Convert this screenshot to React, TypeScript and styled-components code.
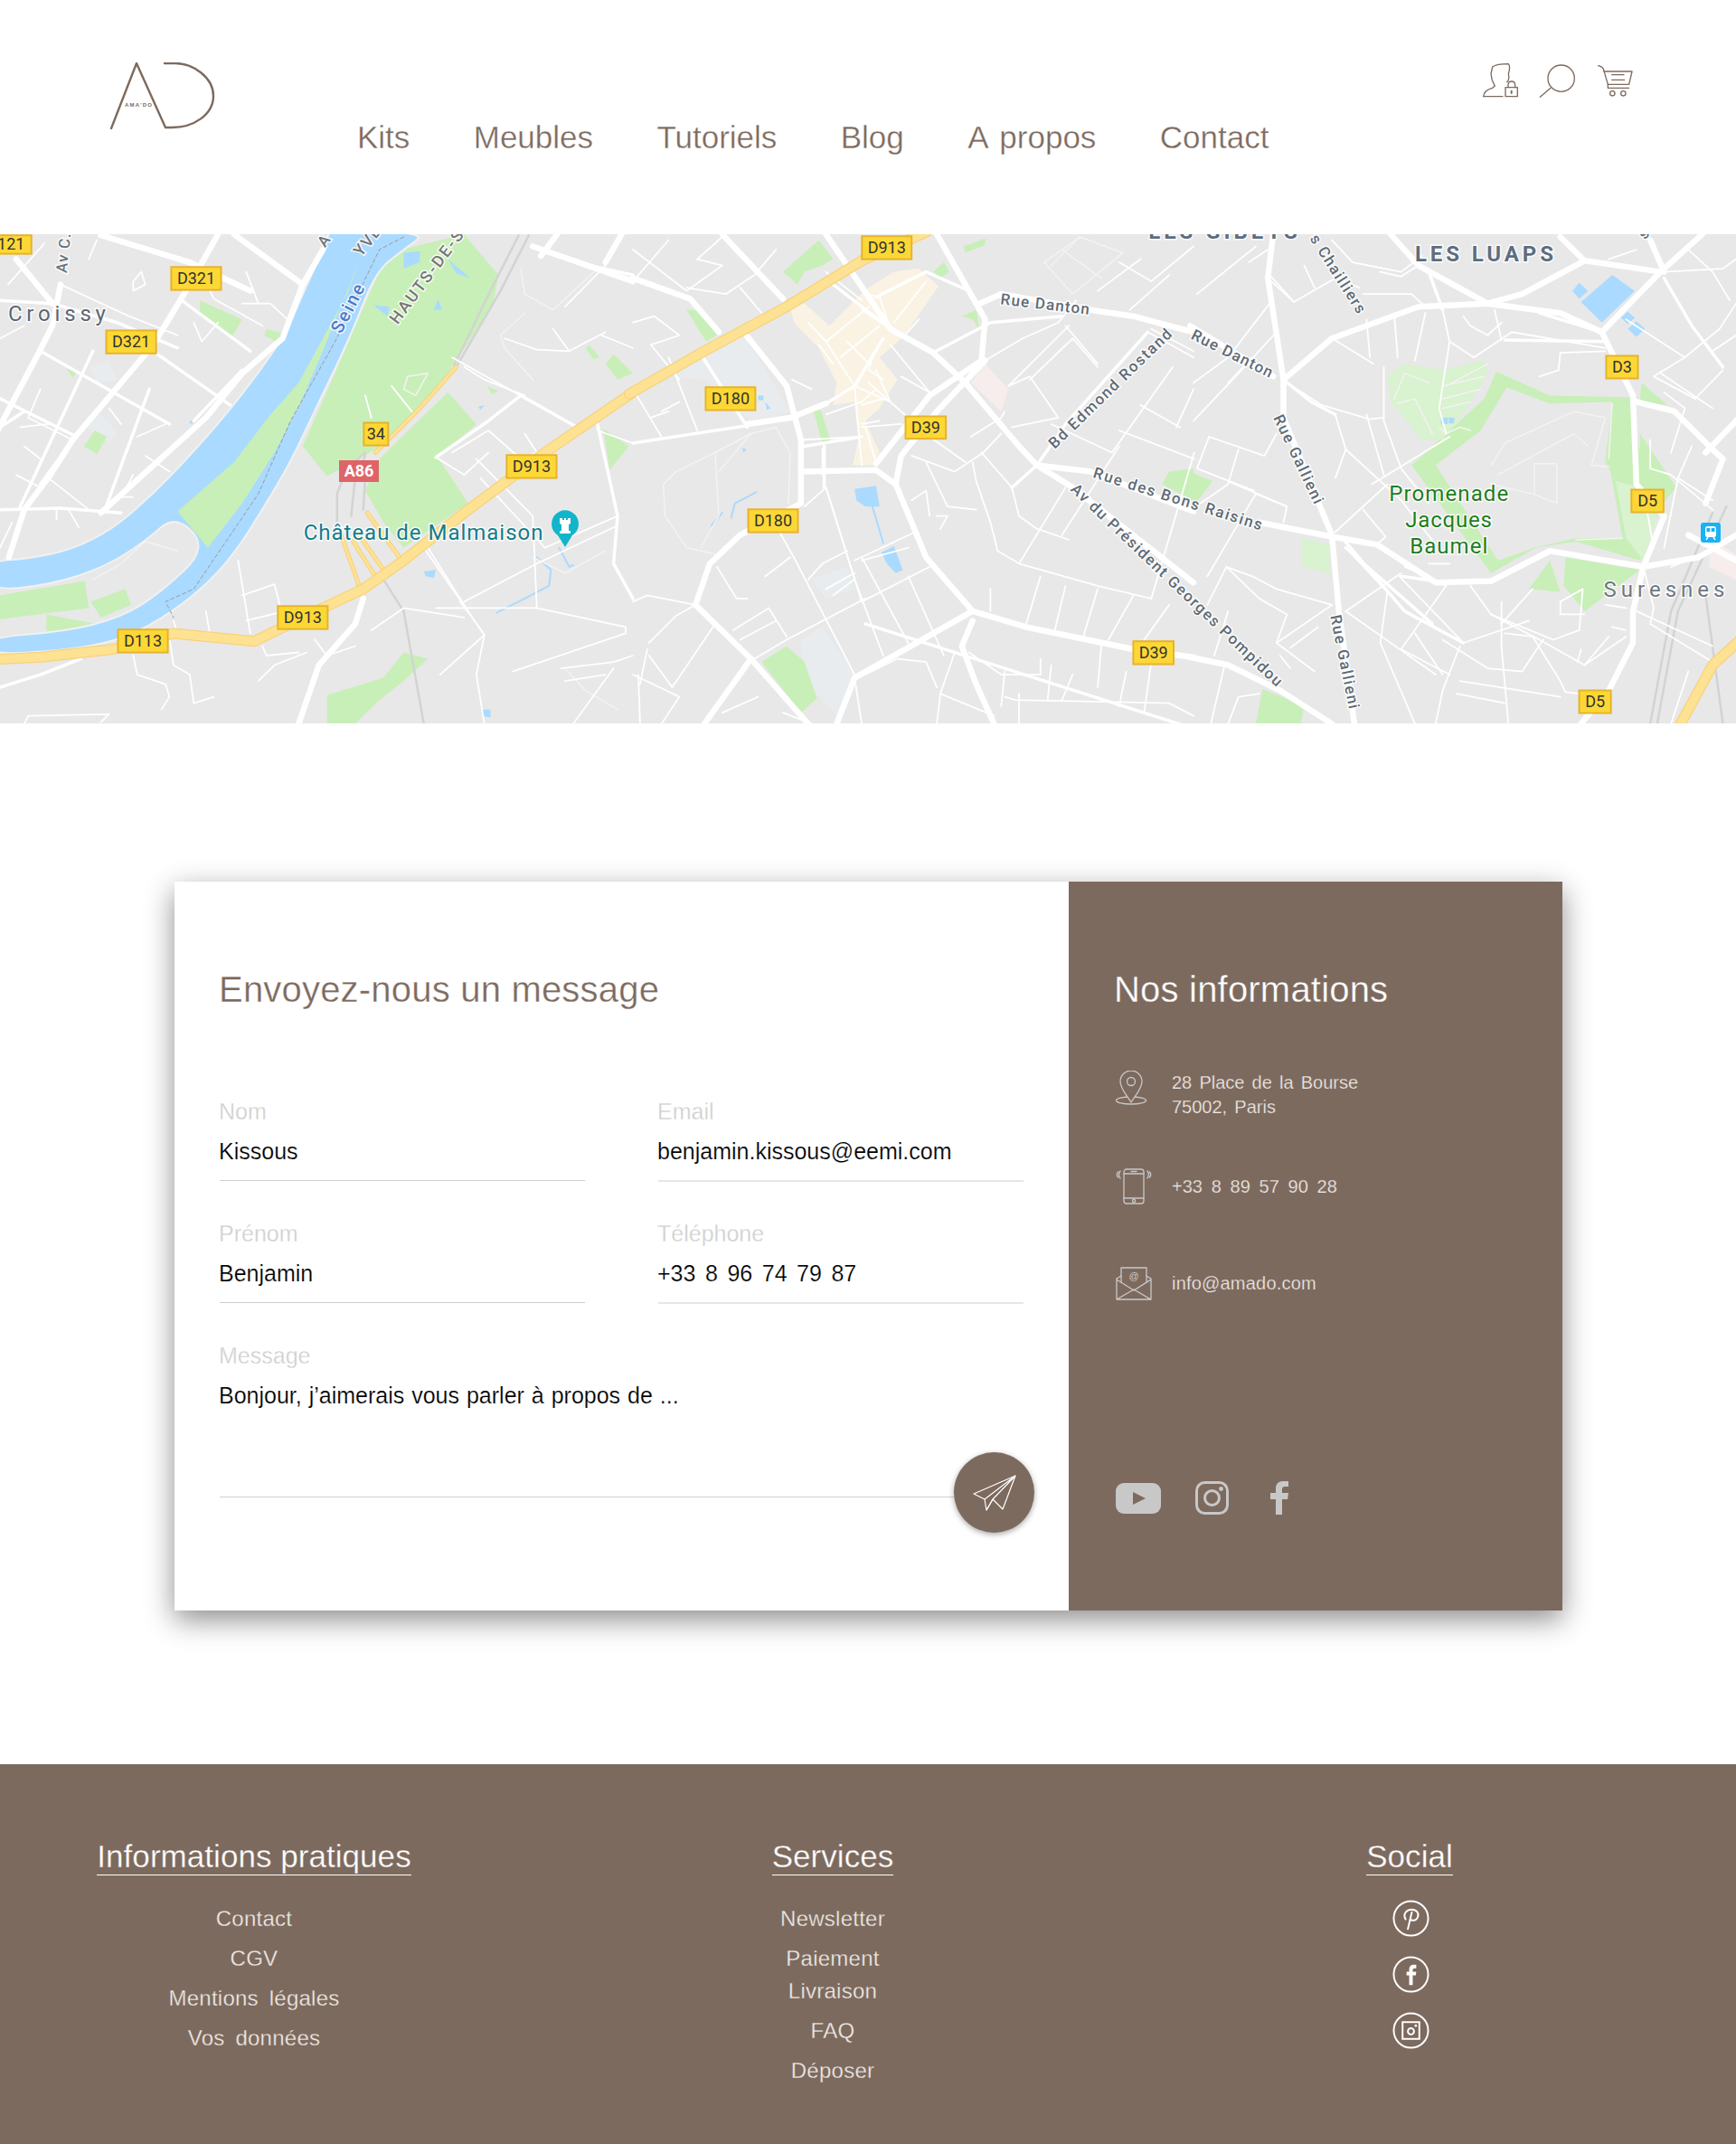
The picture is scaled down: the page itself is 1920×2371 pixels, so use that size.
import styled, { createGlobalStyle } from "styled-components";

const BROWN = "#7d6a5e";
const PALE = "#c8c8c8";

const GlobalStyle = createGlobalStyle`
  html, body { margin: 0; padding: 0; background: #fff; }
  body { font-family: "Liberation Sans", Arial, sans-serif; }
  * { box-sizing: border-box; }
`;

/* ---------- header ---------- */
const Header = styled.header`
  display: flex;
  align-items: flex-start;
  height: 259px;
  padding: 0 114px 0 122px;
`;
const Logo = styled.svg`
  width: 116px;
  height: 74px;
  margin-top: 69px;
  flex: none;
`;
const Nav = styled.nav`
  display: flex;
  gap: 70.4px;
  margin: 132px 0 0 157px;
`;
const NavLink = styled.a`
  font-size: 35px;
  line-height: 40px;
  word-spacing: 4px;
  color: ${BROWN};
  -webkit-text-stroke: 0.35px #fff;
  paint-order: fill stroke;
`;
const HeaderIcons = styled.div`
  display: flex;
  gap: 24px;
  margin: 69px 0 0 auto;
`;
const HeadIcon = styled.svg`
  width: 40px;
  height: 40px;
  overflow: visible;
  fill: none;
  stroke: ${BROWN};
  stroke-width: 4;
  stroke-linecap: round;
  stroke-linejoin: round;
`;

/* ---------- map ---------- */
const MapSvg = styled.svg`
  display: block;
  width: 1920px;
  height: 541px;
  background: #e8e8e8;
`;
const Road = styled.polyline<{ $w: number; $c?: string }>`
  fill: none;
  stroke: ${(p) => p.$c ?? "#fff"};
  stroke-width: ${(p) => p.$w}px;
  stroke-linecap: round;
  stroke-linejoin: round;
  vector-effect: non-scaling-stroke;
`;
const Area = styled.polygon<{ $c: string }>`
  fill: ${(p) => p.$c};
`;
const MapLabel = styled.text<{ $size: number; $c: string; $w?: number }>`
  font-family: Roboto, "Liberation Sans", sans-serif;
  font-size: ${(p) => p.$size}px;
  font-weight: ${(p) => p.$w ?? 500};
  fill: ${(p) => p.$c};
  stroke: rgba(255, 255, 255, 0.85);
  stroke-width: 3px;
  paint-order: stroke;
`;
const ShieldText = styled.text<{ $c: string; $w: number }>`
  font-family: Roboto, "Liberation Sans", sans-serif;
  font-size: 18px;
  font-weight: ${(p) => p.$w};
  fill: ${(p) => p.$c};
  text-anchor: middle;
`;

type Region = {
  ox: number;
  sx: number;
  pale: string[];
  parks: string[];
  water: string[];
  stream: string[];
  lanes: string[];
  small: string[];
  mid: string[];
  big: string[];
  rail: string[];
  ramp: string[];
  highway: string[];
};

const SY = 2.851;

const seine = [
  [815, 12], [790, 90], [750, 200], [710, 320], [640, 450], [560, 580], [470, 710], [380, 830], [280, 940],
  [180, 1005], [70, 1035], [-30, 1042], [-30, 1137], [130, 1115], [260, 1060], [360, 980], [435, 895], [515, 1000],
  [400, 1140], [300, 1220], [160, 1265], [-30, 1282], [-30, 1337], [150, 1325], [290, 1295], [400, 1225], [500, 1130],
  [580, 1020], [650, 880], [720, 730], [790, 540], [870, 330], [930, 130], [1000, 60], [1060, 5], [815, 5],
];

const smoothPath = (pts: number[][]) => {
  const mid = (a: number[], b: number[]) => `${(a[0] + b[0]) / 2},${(a[1] + b[1]) / 2}`;
  let d = `M${mid(pts[pts.length - 1], pts[0])}`;
  pts.forEach((p, i) => {
    d += ` Q${p[0]},${p[1]} ${mid(p, pts[(i + 1) % pts.length])}`;
  });
  return d + "Z";
};

const regions: Region[] = [
  {
    ox: 0,
    sx: 2.24,
    pale: ["220,430 270,410 290,470 240,480", "240,560 290,640 270,670 215,620"],
    parks: [
      "950,100 1010,55 1150,12 1235,140 1220,240 1130,410 1060,540 930,690 810,775 750,680 830,450 880,300",
      "1110,510 1180,610 1085,715 1160,860 1000,1000 950,920 905,820 940,720 1060,570",
      "495,220 600,280 575,335 495,270",
      "660,310 705,325 690,355 655,330",
      "165,435 190,445 180,465",
      "235,630 265,650 240,705 208,680",
      "0,1150 210,1105 220,1190 0,1225",
      "225,1170 310,1130 325,1180 250,1220",
      "115,1210 240,1240 240,1265 115,1270",
      "810,1465 950,1410 1000,1330 1060,1350 1000,1420 940,1480 880,1555 810,1555",
      "1495,625 1558,680 1510,755",
      "1460,360 1485,400 1470,405 1450,370",
      "1520,390 1568,450 1530,470 1500,420",
      "1205,490 1235,505 1220,515",
    ],
    water: [
      "1000,70 1040,65 1040,100 1000,120",
      "1110,90 1165,150 1130,135",
      "925,235 965,240 960,270",
      "1085,215 1095,250 1075,250",
      "1050,1075 1080,1070 1075,1095 1055,1090",
      "1195,1510 1215,1510 1215,1535 1195,1530",
      "1185,555 1200,550 1190,565",
      "470,600 478,600 478,608 470,608",
    ],
    stream: ["1330,1030 1365,1070 1360,1120 1300,1160 1230,1205", "1385,1000 1410,1060 1420,1055"],
    lanes: [
      "1290,120 1300,200 1370,250 1480,120",
      "1300,260 1240,330 1250,370 1320,470",
      "1010,460 1060,450 1030,520 1000,500 1010,460",
      "230,1100 300,1050 360,980 440,1010",
      "1320,1030 1400,1080 1500,1010",
      "1400,1380 1450,1450 1530,1510",
    ],
    small: [
      "260,15 470,105", "60,300 0,340", "330,160 350,130 360,170 330,190 330,160", "150,170 320,270 440,330",
      "600,230 670,230 720,290", "520,190 530,215 650,300", "480,290 500,350 540,290", "100,500 70,590 180,660",
      "50,620 120,610", "60,680 100,720", "40,770 100,810", "120,780 220,880", "270,560 300,610", "340,650 410,610",
      "360,710 420,760", "330,770 300,840 330,840", "170,880 195,935", "140,880 140,910", "30,920 0,1000",
      "590,1040 620,1270", "600,1150 680,1115 695,1190", "610,1230 690,1205", "780,1290 810,1340 880,1310",
      "420,1290 430,1370 470,1400 480,1490 530,1470", "330,1340 340,1400 410,1430 420,1470 400,1510",
      "640,1420 680,1370 760,1330", "650,1310 660,1340 740,1330", "1200,1275 1170,1220 1140,1170",
      "1150,1170 1330,1050 1530,930", "1330,1190 1550,1250 1550,1270 1270,1390", "1050,1000 1200,1275 1090,1400",
      "1080,1190 1330,1190", "1200,1275 1180,1400 1200,1555", "1390,1380 1520,1360 1568,1340", "1400,1420 1500,1400",
      "1520,1380 1420,1555", "920,1260 1000,1190 1150,1220", "60,1555 70,1530 270,1525 250,1550",
      "1120,400 1430,620", "1150,430 1200,470 1300,520", "1400,240 1500,110", "1370,310 1410,380 1500,320",
      "1490,330 1568,370", "1250,340 1330,375 1410,380", "1480,630 1568,670", "1060,1000 1160,1200",
      "1190,780 1350,1000", "1080,715 1150,770 1210,700", "1120,700 1210,630 1290,720 1330,700 1300,640",
      "905,520 920,590", "970,490 1020,570", "520,1270 510,1200", "440,1270 430,1230", "1180,720 1320,900 1330,1190",
      "1350,1000 1530,900", "20,170 110,40", "220,90 240,30", "610,130 640,230",
    ],
    mid: [
      "0,220 130,230 290,290 440,370", "100,380 420,610", "390,390 570,550", "0,530 190,650", "450,220 620,380",
      "0,880 150,875 300,890", "0,1440 100,1400 200,1350", "1480,610 1530,900 1520,1050 1568,1160",
      "1430,620 1290,520 1210,600 1080,715", "1568,140 1460,110", "180,660 100,800", "0,620 60,570",
      "370,500 260,880", "480,600 600,440", "230,380 50,870",
    ],
    big: [
      "540,12 470,170 380,360 260,540 180,660 125,770 60,880 22,1030",
      "150,170 130,300 90,400 -10,640", "40,90 130,230", "250,15 470,100 620,190", "580,12 750,170",
      "800,60 750,170 700,340 600,450 510,590 380,740 250,890", "900,1160 880,1240 790,1370 740,1555",
      "1320,50 1568,160", "1380,12 1340,80", "1540,12 1500,100",
    ],
    rail: [
      "1310,15 1240,190 1130,430", "1285,15 1215,190 1125,425", "905,700 860,750 835,830 835,960",
      "905,710 880,780 870,900", "905,770 900,880", "940,1080 1000,1200 1050,1555",
    ],
    ramp: [
      "1130,430 1040,560 930,700", "845,960 890,1120", "875,980 930,1090", "890,960 950,1070", "910,890 995,1040",
    ],
    highway: ["1568,510 1350,700 1150,890 1000,1040 900,1130 800,1190 630,1295 430,1270 280,1320 100,1345 -10,1352"],
  },
  {
    ox: 700,
    sx: 2.529,
    pale: [
      "110,460 190,395 230,350 310,330 440,570 330,600 200,470",
      "470,1290 530,1250 620,1400 570,1530 480,1420",
      "500,1100 600,1060 620,1130 540,1160",
    ],
    parks: [
      "150,250 185,250 235,330 205,350",
      "420,130 520,30 560,90 530,110 480,130 460,170",
      "920,270 960,250 970,315 950,280",
      "840,130 870,100 885,130 860,150",
      "925,50 985,25 985,45 930,70",
      "505,570 525,565 555,670 530,670",
      "360,1360 430,1310 480,1360 515,1475 470,1520",
      "1480,800 1500,760 1568,750 1568,850",
    ],
    water: [
      "620,815 680,805 690,870 650,870 625,850",
      "695,1015 730,995 755,1070 735,1080 710,1050",
      "225,925 250,890 225,930",
      "350,520 365,520 365,535 350,535",
      "370,540 385,560 375,565",
      "305,685 318,690 310,700",
    ],
    stream: ["670,870 700,985", "345,825 285,860 275,905", "250,890 220,930"],
    lanes: [
      "85,800 120,760 230,700 330,640 400,620 440,700 435,860",
      "230,700 240,900 190,1000",
      "85,800 90,900 150,1000 230,1020",
      "240,760 330,640",
      "1150,100 1250,20 1370,70 1230,200 1150,100",
      "1200,60 1310,150",
      "1250,20 1170,110",
    ],
    small: [
      "0,60 150,190 250,110 180,90", "0,290 60,270 130,330 50,360 130,470", "100,400 180,630", "0,500 80,650",
      "80,570 130,540", "50,590 100,570", "150,180 260,200 340,140 400,60", "300,180 360,260", "540,130 640,220",
      "445,470 500,500", "470,660 640,650", "530,690 530,770", "640,620 750,610", "540,580 640,540 680,500",
      "620,490 720,540", "660,480 830,650 930,730", "750,460 830,510", "720,360 830,510",
      "780,710 900,760 980,700 1030,640", "820,730 880,870 960,880",
      "950,730 960,790 1000,920 1020,1010 1080,1050 1300,1120 1450,1160", "1060,810 1080,900 1130,940 1220,975",
      "1060,810 1130,740", "1080,1050 1210,810", "1200,960 1360,680", "945,650 1030,590 1040,570",
      "1220,300 1050,490 1110,460 1190,590 1060,620", "975,700 1060,810", "985,410 1090,340 1190,290 1240,220",
      "1110,470 1230,340 1300,430", "1300,420 1210,300", "1510,430 1340,700 1170,610", "1420,550 1530,620",
      "1450,310 1568,380", "1520,620 1568,500", "1570,700 1450,1160", "1360,630 1570,720",
      "480,870 540,810 620,1100 700,1340", "540,810 640,1170", "410,950 450,1030 620,1400", "640,1040 770,1000",
      "620,1040 790,950", "640,1170 830,1060", "650,1160 430,1290 340,1350", "640,1030 770,1300", "770,1090 870,1340",
      "280,1260 380,1190 430,1280", "300,1290 400,1230", "235,1060 290,1160 320,1160", "45,1300 120,1215 175,1180",
      "230,1240 110,1440 45,1340", "0,1400 130,1470 80,1555", "20,1555 15,1400", "40,1320 20,1430",
      "0,1170 40,1150 175,1180", "370,1090 440,1030", "530,1050 600,1010", "540,1130 620,1080", "560,1150 620,1100",
      "1100,1240 1140,1090", "1180,1260 1210,1120", "1260,1280 1300,1130", "1330,1290 1400,1150", "1000,1200 1000,1130",
      "1430,1290 1500,1180", "1040,1470 1070,1480 1500,1490", "940,1330 1030,1400 1140,1400 1140,1350",
      "860,1460 1010,1530", "1040,1390 1030,1500", "1080,1460 1080,1555", "1170,1370 1160,1480", "1230,1400 1200,1480",
      "1310,1310 1300,1440", "1380,1390 1360,1500", "1450,1360 1430,1520", "1500,1490 1568,1530", "860,1460 900,1330",
      "860,1460 850,1555", "620,1410 640,1555", "650,1400 740,1350 820,1360 850,1440", "500,1555 420,1520",
      "350,1470 250,1520", "530,1050 490,1100", "780,850 820,820 830,900", "850,900 880,900 860,940",
      "1360,100 1450,160 1568,50", "1390,250 1500,140", "1440,320 1568,400", "1300,190 1420,90",
      "0,160 100,30", "180,90 250,20",
      // old town lanes
      "490,290 540,350 620,490", "540,350 660,240", "580,400 690,300", "600,350 660,420", "640,250 720,310",
      "680,440 720,540", "640,610 690,600", "640,550 700,530", "620,490 640,740", "730,290 820,160", "760,330 800,280",
      "520,360 560,420", "670,400 660,440 700,470", "650,620 680,730", "720,310 690,210 650,200",
    ],
    mid: [
      "0,670 320,615", "540,545 620,490 700,340", "560,170 720,310", "680,210 820,130 940,190",
      "1130,740 1210,610 1440,320", "1130,740 1060,810", "480,680 640,650", "535,680 535,810",
      "650,1240 1568,1570", "190,390 320,620", "840,385 1000,290 1200,270",
    ],
    big: [
      "0,150 160,215 240,320", "250,12 420,215", "310,320 430,490 470,660 470,860 300,960 215,1050 175,1180",
      "320,610 440,590 540,545", "540,12 720,310 840,385 930,480 1080,680 1130,740 1230,810 1568,1110",
      "850,12 985,280 975,410 830,520 680,735", "985,410 850,570 750,710 735,800 820,1030 950,1200",
      "470,760 680,755 735,800", "950,1200 1100,1250 1400,1320 1568,1345", "950,1200 620,1410 570,1555",
      "950,1230 920,1310 960,1430 1010,1555", "175,1180 330,1350 490,1555", "330,1350 200,1555",
      "970,230 1030,200 1280,250 1400,270 1568,320", "1130,740 1280,760 1568,885",
    ],
    rail: [],
    ramp: [],
    highway: ["-10,515 200,380 430,240 640,95 820,5"],
  },
  {
    ox: 1320,
    sx: 2.613,
    pale: [
      "1220,790 1290,810 1340,900 1300,1040 1250,970",
      "560,460 610,420 720,440 840,410 850,450 790,560 720,660 660,660 570,540",
      "310,970 395,990 395,1080 315,1060",
    ],
    parks: [
      "1075,1030 1290,1070 1130,1200 1070,1120",
      "1030,1040 1060,1140 970,1130",
      "0,765 55,790 0,870",
      "200,1445 320,1500 310,1555 180,1555",
      "1295,480 1370,550 1290,540",
      "1290,640 1395,810 1340,880 1290,800",
    ],
    water: [
      "1210,140 1275,190 1180,290 1120,225",
      "1115,165 1140,190 1115,215 1095,190",
      "1255,255 1275,275 1255,295 1235,275",
      "1280,285 1305,310 1280,335 1255,310",
      "715,590 735,590 735,610 715,610",
      "738,588 755,592 752,608 738,608",
    ],
    stream: [],
    lanes: [
      "860,740 900,670 1100,570 1190,590 1150,740 1200,745", "880,770 1100,640 1140,680",
      "985,735 1050,735 1050,860 980,830 860,800", "985,735 985,830", "730,490 850,420", "720,490 840,460",
      "720,530 830,500", "720,560 800,540", "580,530 610,450 680,480", "590,545 640,530 690,640",
      "710,620 730,640 770,620 800,630", "1105,975 1240,970", "1210,545 1200,720",
    ],
    small: [
      "215,150 290,225 410,150 480,180", "320,110 350,180", "400,30 460,100 600,130 660,80", "540,130 600,145 650,110",
      "490,200 630,200 670,240", "500,280 510,400", "580,260 590,400", "670,260 640,410", "720,250 740,350 710,560 730,640",
      "740,350 810,400 920,320 1190,370", "890,345 870,250", "780,270 800,300 850,330 890,290", "1060,385 1190,380",
      "1060,385 1055,440 1000,460", "400,340 520,420", "270,480 370,550 510,595 550,590", "410,580 440,690 600,850 700,990",
      "550,430 550,600 600,750 680,860", "500,580 550,770", "515,800 740,650", "410,950 560,800", "490,880 555,965 530,990",
      "440,690 410,780", "610,1060 730,1120", "680,1050 740,1050", "600,1080 440,1200", "595,1090 780,1300 970,1230",
      "730,1120 600,1320 740,1400", "440,1000 560,1140 540,1300 640,1555", "440,1200 700,1400", "640,1270 720,1400",
      "250,1340 280,1380", "190,1160 270,1210 240,1300 350,1390", "190,1160 95,1060 40,1180", "95,1060 170,1090 240,1130 400,1180",
      "240,1300 400,1180", "360,1250 280,1315", "60,1340 100,1200", "130,690 100,800 20,860", "45,650 205,710 240,640",
      "45,650 10,750 175,820", "100,790 270,870 260,920", "180,830 270,870", "180,830 40,1090",
      "800,1120 860,1210 1000,1290 1130,1370 1250,1280", "890,1170 890,1310 910,1555", "980,1130 890,1240",
      "860,1210 1040,1290 1115,1260 1125,1130 1060,1170 1060,1210 1130,1210", "1010,1290 950,1390 850,1380 720,1290",
      "900,1270 980,1280 1060,1420 1075,1455 1200,1470", "770,1420 1060,1470", "770,1310 720,1450 700,1555",
      "760,1460 900,1490", "1120,1320 1110,1360", "1190,1180 1250,1190", "1210,1250 1250,1260", "1280,1200 1500,1310",
      "1330,1190 1320,1240 1500,1360", "1300,1060 1330,1190", "1500,880 1380,770 1320,750 1320,660", "1380,1060 1450,1030",
      "1310,880 1330,1000", "1440,680 1400,780 1500,850", "1400,780 1360,1000", "1360,130 1530,120 1568,90",
      "1430,60 1500,130 1550,220", "1250,280 1420,400 1330,460 1450,530", "1420,400 1520,310 1568,230", "1350,450 1500,560",
      "1450,530 1530,440", "1530,640 1568,590", "1280,60 1200,90", "1500,380 1568,330", "1360,510 1420,560 1380,700",
      "0,480 100,400 220,230", "0,600 130,450 240,320", "10,200 180,50", "160,100 215,60", "100,480 170,400", "290,225 220,140",
      "100,1555 130,1470 190,1460", "50,1555 90,1370", "1130,1370 1200,1280", "1430,1390 1380,1555",
    ],
    mid: [
      "1360,150 1440,300 1530,430", "720,250 680,130", "1000,260 1180,320", "260,470 340,540 410,580", "900,345 1190,350",
      "430,970 610,1200 780,1300", "440,1000 690,1240", "600,1090 730,1110",
    ],
    big: [
      "230,12 215,150 260,470 260,590 400,960 420,1200 465,1555",
      "260,470 400,340 650,240 850,230 1060,260 1180,320 1270,520 1280,800 1360,900 1300,1060 1270,1200 1270,1300 1200,1450 1120,1555",
      "-10,1345 100,1370 250,1450 400,1555", "190,920 400,965 530,990 700,1110 860,1105 1030,1010 1300,1060 1460,1030 1568,960",
      "570,12 650,110 850,230", "850,230 950,200 1130,95 1350,130 1470,12", "1180,320 1350,130", "1320,30 1360,130",
      "1280,540 1390,570 1500,690 1530,720 1480,860", "1568,600 1480,700", "1060,20 1130,95", "-10,300 230,460",
      "1430,960 1568,1040",
    ],
    rail: ["1540,870 1400,1200 1340,1555", "1500,890 1380,1200 1320,1555", "1480,1150 1530,1555"],
    ramp: [],
    highway: ["1580,1290 1500,1370 1400,1570"],
  },
];

type ShieldData = { r: number; x: number; y: number; w: number; h: number; t: string };
const shields: ShieldData[] = [
  { r: 0, x: -25, y: 12, w: 105, h: 64, t: "121" },
  { r: 0, x: 422, y: 112, w: 128, h: 78, t: "D321" },
  { r: 0, x: 261, y: 312, w: 128, h: 78, t: "D321" },
  { r: 0, x: 899, y: 603, w: 65, h: 77, t: "34" },
  { r: 0, x: 1253, y: 705, w: 128, h: 78, t: "D913" },
  { r: 0, x: 686, y: 1181, w: 128, h: 78, t: "D913" },
  { r: 0, x: 290, y: 1255, w: 128, h: 78, t: "D113" },
  { r: 1, x: 638, y: 15, w: 144, h: 78, t: "D913" },
  { r: 1, x: 201, y: 491, w: 144, h: 78, t: "D180" },
  { r: 1, x: 760, y: 583, w: 118, h: 76, t: "D39" },
  { r: 1, x: 320, y: 876, w: 144, h: 78, t: "D180" },
  { r: 1, x: 1397, y: 1292, w: 118, h: 78, t: "D39" },
  { r: 2, x: 1190, y: 392, w: 97, h: 77, t: "D3" },
  { r: 2, x: 1263, y: 814, w: 98, h: 77, t: "D5" },
  { r: 2, x: 1112, y: 1447, w: 97, h: 77, t: "D5" },
];

type LabelData = { r: number; t: string; a: number[]; b: number[]; size: number; c: string; w?: number };
const ROAD_C = "#5f6b76";
const labels: LabelData[] = [
  { r: 0, t: "Croissy", a: [20, 285], b: [262, 285], size: 24, c: "#5b6670", w: 400 },
  { r: 0, t: "Av C.", a: [165, 135], b: [175, 10], size: 17, c: "#6b747c" },
  { r: 0, t: "A", a: [805, 55], b: [825, 20], size: 17, c: "#6b747c" },
  { r: 0, t: "YVE", a: [895, 85], b: [945, 5], size: 18, c: "#777" },
  { r: 0, t: "HAUTS-DE-S", a: [985, 298], b: [1150, 15], size: 18, c: "#777" },
  { r: 0, t: "Seine", a: [845, 328], b: [905, 180], size: 20, c: "#4a7ccc" },
  { r: 0, t: "Château de Malmaison", a: [752, 975], b: [1345, 975], size: 24, c: "#137c8b", w: 400 },
  { r: 1, t: "Rue Danton", a: [1027, 232], b: [1275, 265], size: 17, c: ROAD_C },
  { r: 1, t: "Bd Edmond Rostand", a: [1180, 690], b: [1510, 330], size: 17, c: ROAD_C },
  { r: 1, t: "Rue des Bons Raisins", a: [1285, 778], b: [1755, 945], size: 17, c: ROAD_C },
  { r: 1, t: "Av du Président Georges Pompidou", a: [1222, 818], b: [1800, 1440], size: 17, c: ROAD_C },
  { r: 2, t: "LES LUAPS", a: [640, 98], b: [1040, 98], size: 24, c: "#5d6d80", w: 700 },
  { r: 2, t: "LES GIBETS", a: [-130, 26], b: [300, 26], size: 24, c: "#5d6d80", w: 700 },
  { r: 2, t: "s Chailliers", a: [335, 25], b: [475, 265], size: 17, c: ROAD_C },
  { r: 2, t: "s", a: [1305, 30], b: [1320, 10], size: 17, c: ROAD_C },
  { r: 2, t: "Rue Danton", a: [-10, 340], b: [220, 465], size: 17, c: ROAD_C },
  { r: 2, t: "Rue Gallieni", a: [230, 590], b: [350, 865], size: 17, c: ROAD_C },
  { r: 2, t: "Rue Gallieni", a: [395, 1215], b: [450, 1510], size: 17, c: ROAD_C },
  { r: 2, t: "Promenade", a: [565, 853], b: [910, 853], size: 24, c: "#1e7e1e", w: 400 },
  { r: 2, t: "Jacques", a: [612, 935], b: [862, 935], size: 24, c: "#1e7e1e", w: 400 },
  { r: 2, t: "Baumel", a: [625, 1018], b: [850, 1018], size: 24, c: "#1e7e1e", w: 400 },
  { r: 2, t: "Suresnes", a: [1185, 1155], b: [1535, 1155], size: 24, c: "#6f7782", w: 400 },
];

const toFull = (r: number, p: number[]) => {
  const reg = regions[r];
  return [reg.ox + p[0] / reg.sx, p[1] / SY - 4];
};

const ISLAND = "895,80 860,200 800,340 740,480 670,580 580,730 440,885 515,1000 600,860 680,700 745,540 800,380";

const MapView = () => (
  <MapSvg viewBox="0 0 1920 541">
    {regions.map((reg, i) => (
      <g key={i} transform={`translate(${reg.ox} -4) scale(${1 / reg.sx} ${1 / SY})`}>
        {i === 1 && (
          <>
            <Area $c="#faf3e3" points="440,240 480,230 550,300 620,220 660,180 730,130 800,120 855,175 760,330 690,400 740,470 690,560 650,600 690,700 670,740 615,740 630,660 620,540 560,550 570,480 520,370 450,290" />
            <Area $c="#f8eded" points="985,420 1050,500 1030,570 945,480" />
          </>
        )}
        {i === 2 && (
          <>
            <Area $c="#f8eded" points="1490,970 1568,1020 1568,1100 1490,1060" />
            <path
              fill="#c8efb8"
              fillRule="evenodd"
              d="M875,445 L1030,520 L1260,525 L1290,700 L1300,800 L1340,900 L1290,1040 L1105,980 L990,1000 L860,1080 L630,740 L730,640 L840,530Z M905,495 L830,630 L700,740 L880,1040 L985,1000 L1105,970 L1240,970 L1205,760 L1190,730 L1210,540 L1030,545Z"
            />
          </>
        )}
        {reg.pale.map((p) => (
          <Area key={p} $c={i === 2 ? "#d9f2cf" : "#e9ecee"} points={p} />
        ))}
        {reg.parks.map((p) => (
          <Area key={p} $c="#c8efb8" points={p} />
        ))}
        {i === 0 && (
          <>
            <path d={smoothPath(seine)} fill="#aadaff" stroke="#f1f1f1" strokeWidth={2} vectorEffect="non-scaling-stroke" />
            <Area $c="#c8efb8" points={ISLAND} />
            <Road $w={1} $c="#9b9b9b" strokeDasharray="4 3" points="1000,20 940,60 830,350 720,600 640,830 480,1130 410,1170 430,1220" />
          </>
        )}
        {reg.water.map((p) => (
          <Area key={p} $c="#aadaff" points={p} />
        ))}
        {reg.stream.map((p) => (
          <Road key={p} $w={2} $c="#aadaff" points={p} />
        ))}
        {reg.lanes.map((p) => (
          <Road key={p} $w={1.5} $c="#f3f3f3" points={p} />
        ))}
        {reg.rail.map((p) => (
          <Road key={p} $w={2.5} $c="#d3d3d3" points={p} />
        ))}
        {reg.small.map((p) => (
          <Road key={p} $w={1.8} points={p} />
        ))}
        {reg.mid.map((p) => (
          <Road key={p} $w={3.5} points={p} />
        ))}
        {reg.big.map((p) => (
          <Road key={p} $w={6.5} points={p} />
        ))}
        {reg.ramp.map((p) => (
          <Road key={p} $w={5} $c="#f8d27c" points={p} />
        ))}
        {reg.ramp.map((p) => (
          <Road key={p} $w={3} $c="#fde293" points={p} />
        ))}
        {reg.highway.map((p) => (
          <Road key={p} $w={12} $c="#f9d27a" points={p} />
        ))}
        {reg.highway.map((p) => (
          <Road key={p} $w={9.5} $c="#fde293" points={p} />
        ))}
      </g>
    ))}

    {/* Malmaison pin */}
    <g transform="translate(610 306)">
      <path d="M15,40 L7,27 A15,15 0 1 1 23,27 Z" fill="#12b5cb" />
      <path d="M9,8 H12 V10 H14 V8 H16 V10 H18 V8 H21 V14 L19,15 V22 H21 V25 H9 V22 H11 V15 L9,14 Z" fill="#fff" />
    </g>

    {/* metro */}
    <g transform="translate(1881 319)">
      <rect width="22" height="22" rx="3" fill="#19b2f5" />
      <rect x="5" y="4" width="12" height="12" rx="2.5" fill="#fff" />
      <rect x="6.5" y="6" width="3.8" height="4" fill="#19b2f5" />
      <rect x="11.7" y="6" width="3.8" height="4" fill="#19b2f5" />
      <path d="M6,19 L8,16 M16,19 L14,16" stroke="#fff" strokeWidth="1.4" />
    </g>

    {/* A86 */}
    <rect x="375" y="250" width="44" height="24" fill="#df6468" />
    <ShieldText x="397" y="268" $c="#fff" $w={700}>
      A86
    </ShieldText>

    {labels.map((l, i) => {
      const [x1, y1] = toFull(l.r, l.a);
      const [x2, y2] = toFull(l.r, l.b);
      const angle = (Math.atan2(y2 - y1, x2 - x1) * 180) / Math.PI;
      const len = Math.hypot(x2 - x1, y2 - y1);
      return (
        <MapLabel
          key={i}
          x={x1}
          y={y1}
          transform={`rotate(${angle} ${x1} ${y1})`}
          textLength={len}
          $size={l.size}
          $c={l.c}
          $w={l.w}
        >
          {l.t}
        </MapLabel>
      );
    })}

    {shields.map((s, i) => {
      const [x, y] = toFull(s.r, [s.x, s.y]);
      const reg = regions[s.r];
      const w = s.w / reg.sx;
      const h = s.h / SY;
      return (
        <g key={i}>
          <rect x={x + 1} y={y + 1} width={w - 2} height={h - 2} fill="#fdd835" stroke="#e6b32e" strokeWidth={2} />
          <ShieldText x={x + w / 2} y={y + h / 2 + 6} $c="#333" $w={400}>
            {s.t}
          </ShieldText>
        </g>
      );
    })}
  </MapSvg>
);

/* ---------- contact card ---------- */
const Card = styled.section`
  display: flex;
  width: 1535px;
  height: 806px;
  margin: 175px 0 170px 193px;
  box-shadow: 0 10px 30px rgba(0, 0, 0, 0.45);
`;
const FormPanel = styled.div`
  width: 989px;
  padding: 96px 50px 0;
  background: #fff;
`;
const InfoPanel = styled.aside`
  display: flex;
  flex-direction: column;
  width: 546px;
  padding: 96px 50px 106px;
  background: ${BROWN};
`;
const Title = styled.h2<{ $light?: boolean }>`
  margin: 0 0 0 ${(p) => (p.$light ? "0" : "-1px")};
  font-size: 40px;
  font-weight: 400;
  line-height: 46px;
  letter-spacing: 0.2px;
  color: ${(p) => (p.$light ? "#fff" : BROWN)};
  -webkit-text-stroke: 0.35px ${(p) => (p.$light ? BROWN : "#fff")};
  paint-order: fill stroke;
`;
const FieldGrid = styled.div`
  display: grid;
  grid-template-columns: 404px 404px;
  column-gap: 81px;
  row-gap: 43px;
  margin-top: 98px;
`;
const Field = styled.div<{ $wide?: boolean }>`
  position: relative;
  grid-column: ${(p) => (p.$wide ? "1 / 3" : "auto")};
`;
const FieldLabel = styled.div`
  margin-left: -1px;
  font-size: 25px;
  line-height: 28px;
  color: #cfcfcf;
  -webkit-text-stroke: 0.3px #fff;
  paint-order: fill stroke;
`;
const FieldValue = styled.div<{ $tall?: boolean; $soft?: boolean; $word?: number }>`
  margin-top: 16px;
  padding-bottom: ${(p) => (p.$tall ? "98px" : "18px")};
  font-size: 25px;
  line-height: 28px;
  word-spacing: ${(p) => p.$word ?? 1}px;
  color: #000;
  text-indent: -1px;
  -webkit-text-stroke: 0.2px #fff;
  paint-order: fill stroke;
  border-bottom: ${(p) => (p.$soft ? "2px solid #e6e6e6" : "1px solid #cfcfcf")};
`;
const SendButton = styled.button`
  position: absolute;
  right: -12px;
  bottom: -39px;
  display: flex;
  align-items: center;
  justify-content: center;
  width: 89px;
  height: 89px;
  padding: 0;
  border: 0;
  border-radius: 50%;
  background: ${BROWN};
  box-shadow: 0 2px 6px rgba(0, 0, 0, 0.35);
`;
const InfoRow = styled.div<{ $top: number; $align: string }>`
  display: flex;
  align-items: ${(p) => p.$align};
  min-height: 54px;
  margin-top: ${(p) => p.$top}px;
  padding-left: 2px;
`;
const InfoIcon = styled.svg`
  flex: none;
  margin-right: 22px;
  fill: none;
  stroke: ${PALE};
  stroke-width: 1.3;
  stroke-linejoin: round;
  stroke-linecap: round;
`;
const InfoText = styled.div<{ $word?: number; $track?: number }>`
  font-size: 20px;
  line-height: 27px;
  word-spacing: ${(p) => p.$word ?? 2.6}px;
  letter-spacing: ${(p) => p.$track ?? 0}px;
  color: #eee9e5;
  -webkit-text-stroke: 0.25px ${BROWN};
  paint-order: fill stroke;
`;
const SocialRow = styled.div`
  display: flex;
  align-items: center;
  gap: 38px;
  margin-top: auto;
  padding-left: 2px;
`;

/* ---------- footer ---------- */
const Footer = styled.footer`
  display: grid;
  grid-template-columns: 562px 718px 558px;
  height: 420px;
  padding-top: 82px;
  background: ${BROWN};
`;
const FooterCol = styled.div`
  display: flex;
  flex-direction: column;
  align-items: center;
`;
const FooterHead = styled.h3`
  margin: 0 0 30px;
  font-size: 35px;
  font-weight: 400;
  line-height: 40px;
  letter-spacing: 0.05px;
  color: #fff;
  border-bottom: 1px solid #fff;
  -webkit-text-stroke: 0.3px ${BROWN};
  paint-order: fill stroke;
`;
const FooterLink = styled.a`
  display: block;
  margin-bottom: 8px;
  font-size: 24px;
  line-height: 36px;
  letter-spacing: 0.25px;
  word-spacing: 5px;
  text-align: center;
  color: #efeae6;
  -webkit-text-stroke: 0.3px ${BROWN};
  paint-order: fill stroke;
`;
const RoundIcons = styled.div`
  display: flex;
  flex-direction: column;
  gap: 21px;
  margin: -3px 0 0 2px;
`;
const RoundIcon = styled.svg`
  display: block;
  width: 41px;
  height: 41px;
  fill: none;
  stroke: #fff;
  stroke-width: 2;
`;

const infoCols = [
  { head: "Informations pratiques", items: ["Contact", "CGV", "Mentions légales", "Vos données"] },
  { head: "Services", items: ["Newsletter", "Paiement\nLivraison", "FAQ", "Déposer"] },
];

const App = () => (
  <>
    <GlobalStyle />
    <Header>
      <Logo viewBox="0 0 116 74">
        <path
          d="M1,73 L29,1 L61,72 H68 C92,72 114,58 114,37 C114,17 92,1 72,1 H60"
          fill="none"
          stroke={BROWN}
          strokeWidth="2.4"
          strokeLinecap="round"
          strokeLinejoin="round"
        />
        <text x="16" y="49" fontSize="6" fontWeight="700" fill={BROWN} fontFamily="Liberation Sans" textLength="30">
          AMA’DO
        </text>
      </Logo>
      <Nav>
        {["Kits", "Meubles", "Tutoriels", "Blog", "A propos", "Contact"].map((n) => (
          <NavLink key={n}>{n}</NavLink>
        ))}
      </Nav>
      <HeaderIcons>
        <HeadIcon viewBox="114 57 120 120">
          <path d="M122,170 C124,155 135,147 150,143 L160,135 C155,125 148,118 148,100 C145,95 150,85 152,72 C165,62 185,62 205,62 C212,70 208,85 205,95 C208,108 205,118 200,122" />
          <path d="M122,170 H186" />
          <rect x="195" y="140" width="40" height="30" />
          <path d="M204,140 V132 C204,116 227,116 227,132 V140" />
          <path d="M215,152 V159" strokeWidth="6" />
        </HeadIcon>
        <HeadIcon viewBox="306 57 120 120">
          <circle cx="380" cy="110" r="44" />
          <path d="M345,142 L310,172" />
        </HeadIcon>
        <HeadIcon viewBox="498 57 120 120">
          <path d="M503,68 C515,70 520,75 522,85 L535,130 V142 H605" />
          <path d="M522,87 H615 L605,130 H535" />
          <path d="M548,98 H588 M548,115 H590" />
          <circle cx="550" cy="160" r="8" />
          <circle cx="586" cy="160" r="8" />
        </HeadIcon>
      </HeaderIcons>
    </Header>

    <MapView />

    <Card>
      <FormPanel>
        <Title>Envoyez-nous un message</Title>
        <FieldGrid>
          <Field>
            <FieldLabel>Nom</FieldLabel>
            <FieldValue>Kissous</FieldValue>
          </Field>
          <Field>
            <FieldLabel>Email</FieldLabel>
            <FieldValue $soft>benjamin.kissous@eemi.com</FieldValue>
          </Field>
          <Field>
            <FieldLabel>Prénom</FieldLabel>
            <FieldValue>Benjamin</FieldValue>
          </Field>
          <Field>
            <FieldLabel>Téléphone</FieldLabel>
            <FieldValue $soft $word={3.6}>
              +33 8 96 74 79 87
            </FieldValue>
          </Field>
          <Field $wide>
            <FieldLabel>Message</FieldLabel>
            <FieldValue $tall>Bonjour, j’aimerais vous parler à propos de ...</FieldValue>
            <SendButton aria-label="Envoyer">
              <svg width="48" height="40" viewBox="0 0 48 40" fill="none" stroke="#fff" strokeWidth="1.2" strokeLinejoin="round">
                <path d="M1,21 L47,1 L33,38 L22,27 L15,39 L13,27 Z" />
                <path d="M47,1 L13,27 M47,1 L22,27 M15,39 L22,27" />
              </svg>
            </SendButton>
          </Field>
        </FieldGrid>
      </FormPanel>

      <InfoPanel>
        <Title $light>Nos informations</Title>
        <InfoRow $top={67} $align="flex-start">
          <InfoIcon width="40" height="38" viewBox="0 0 40 38">
            <ellipse cx="17" cy="33" rx="16.5" ry="4" />
            <path d="M17,35 C12,27 5,20 5,12 A12,12 0 0 1 29,12 C29,20 22,27 17,35Z" fill={BROWN} />
            <circle cx="17" cy="12" r="4.5" />
          </InfoIcon>
          <InfoText>
            28 Place de la Bourse
            <br />
            75002, Paris
          </InfoText>
        </InfoRow>
        <InfoRow $top={47} $align="center">
          <InfoIcon width="40" height="40" viewBox="0 0 40 40">
            <rect x="9" y="1" width="22" height="38" rx="3" />
            <path d="M9,6 H31 M9,33 H31 M17,3.5 H23" />
            <circle cx="20" cy="36" r="1.6" />
            <path d="M5,3 Q2,7 5,11 M2.5,4 Q0,7 2.5,10 M35,3 Q38,7 35,11 M37.5,4 Q40,7 37.5,10" />
          </InfoIcon>
          <InfoText $word={4.2}>+33 8 89 57 90 28</InfoText>
        </InfoRow>
        <InfoRow $top={53} $align="center">
          <InfoIcon width="40" height="37" viewBox="0 0 40 37">
            <path d="M1,13 V36 H39 V13 L34,10 M1,13 L6,10 M1,36 L20,25 L39,36 M1,14 L20,26 L39,14" />
            <path d="M6,17 V1 H34 V17" />
            <text x="20" y="14" fontSize="11" textAnchor="middle" fill={PALE} stroke="none" fontFamily="Liberation Sans">
              @
            </text>
          </InfoIcon>
          <InfoText $track={0.2}>info@amado.com</InfoText>
        </InfoRow>
        <SocialRow>
          <svg width="50" height="34" viewBox="0 0 50 34">
            <rect width="50" height="34" rx="9" fill={PALE} />
            <path d="M19,10 L33,17 L19,24Z" fill={BROWN} />
          </svg>
          <svg width="37" height="37" viewBox="0 0 37 37" fill="none" stroke={PALE} strokeWidth="3">
            <rect x="1.5" y="1.5" width="34" height="34" rx="9" />
            <circle cx="18.5" cy="18.5" r="8" />
            <circle cx="28.5" cy="8.5" r="2.4" fill={PALE} stroke="none" />
          </svg>
          <svg width="29" height="37" viewBox="-8 0 29 37" fill={PALE}>
            <path d="M6,37 V20 H0 V13 H6 V8 C6,3 9,0 14,0 H20 V6 H16 C13.5,6 13,7.5 13,9 V13 H20 L19,20 H13 V37Z" />
          </svg>
        </SocialRow>
      </InfoPanel>
    </Card>

    <Footer>
      {infoCols.map((col) => (
        <FooterCol key={col.head}>
          <FooterHead>{col.head}</FooterHead>
          {col.items.map((it) => (
            <FooterLink key={it}>
              {it.split("\n").map((line) => (
                <div key={line}>{line}</div>
              ))}
            </FooterLink>
          ))}
        </FooterCol>
      ))}
      <FooterCol>
        <FooterHead>Social</FooterHead>
        <RoundIcons>
          <RoundIcon viewBox="0 0 42 42">
            <circle cx="21" cy="21" r="19.5" />
            <path d="M15,22 C11,15 17,11 22,11 C28,11 31,16 28,21 C26,24 22,24 20,22 M22,14 L17.5,33" strokeWidth="2" strokeLinecap="round" />
          </RoundIcon>
          <RoundIcon viewBox="0 0 42 42">
            <circle cx="21" cy="21" r="19.5" />
            <path d="M19,33 V22 H16 V18 H19 V15 C19,12 21,10 24,10 H27 V14 H25 C23.5,14 23,15 23,16 V18 H27 L26.5,22 H23 V33Z" fill="#fff" stroke="none" />
          </RoundIcon>
          <RoundIcon viewBox="0 0 42 42">
            <circle cx="21" cy="21" r="19.5" />
            <rect x="11.5" y="11.5" width="19" height="19" strokeWidth="2" />
            <circle cx="21" cy="22" r="3.5" strokeWidth="2" />
            <circle cx="26.5" cy="15.5" r="1.4" fill="#fff" stroke="none" />
          </RoundIcon>
        </RoundIcons>
      </FooterCol>
    </Footer>
  </>
);

export default App;
